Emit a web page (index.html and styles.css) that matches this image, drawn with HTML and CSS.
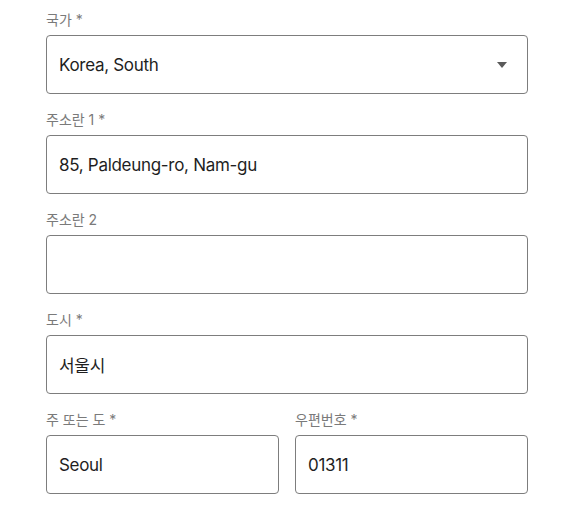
FILE: index.html
```html
<!DOCTYPE html>
<html lang="ko">
<head>
<meta charset="utf-8">
<link rel="stylesheet" href="styles.css">
</head>
<body>
<form class="form">
  <div class="field">
    <label class="label">국가 *</label>
    <div class="box select">
      <span class="value">Korea, South</span>
      <svg class="caret" width="10" height="6" viewBox="0 0 10 6"><path d="M0 0H10L5 6Z" fill="#5a5a5a"/></svg>
    </div>
  </div>
  <div class="field">
    <label class="label">주소란 1 *</label>
    <div class="box"><span class="value">85, Paldeung-ro, Nam-gu</span></div>
  </div>
  <div class="field">
    <label class="label">주소란 2</label>
    <div class="box"><span class="value"></span></div>
  </div>
  <div class="field">
    <label class="label">도시 *</label>
    <div class="box"><span class="value">서울시</span></div>
  </div>
  <div class="row">
    <div class="field">
      <label class="label">주 또는 도 *</label>
      <div class="box"><span class="value">Seoul</span></div>
    </div>
    <div class="field">
      <label class="label">우편번호 *</label>
      <div class="box"><span class="value">01311</span></div>
    </div>
  </div>
</form>
</body>
</html>
```
FILE: styles.css
```css
html, body {
  margin: 0;
  background: #fff;
}
body {
  font-family: Inter, "Noto Sans CJK KR", sans-serif;
  color: #1f1f1f;
}
.form {
  width: 482px;
  padding: 10px 0 0 46px;
  display: flex;
  flex-direction: column;
  gap: 16px;
}
.field {
  display: flex;
  flex-direction: column;
  gap: 5px;
}
.label {
  font-size: 14px;
  line-height: 20px;
  color: #7a7a7a;
}
.box {
  box-sizing: border-box;
  height: 59px;
  border: 1px solid #7d7d7d;
  border-radius: 4px;
  display: flex;
  align-items: center;
  padding: 0 12px;
  font-size: 17px;
  letter-spacing: -0.3px;
}
.select {
  justify-content: space-between;
  padding-right: 20px;
}
.row {
  display: grid;
  grid-template-columns: 1fr 1fr;
  gap: 16px;
}
```
